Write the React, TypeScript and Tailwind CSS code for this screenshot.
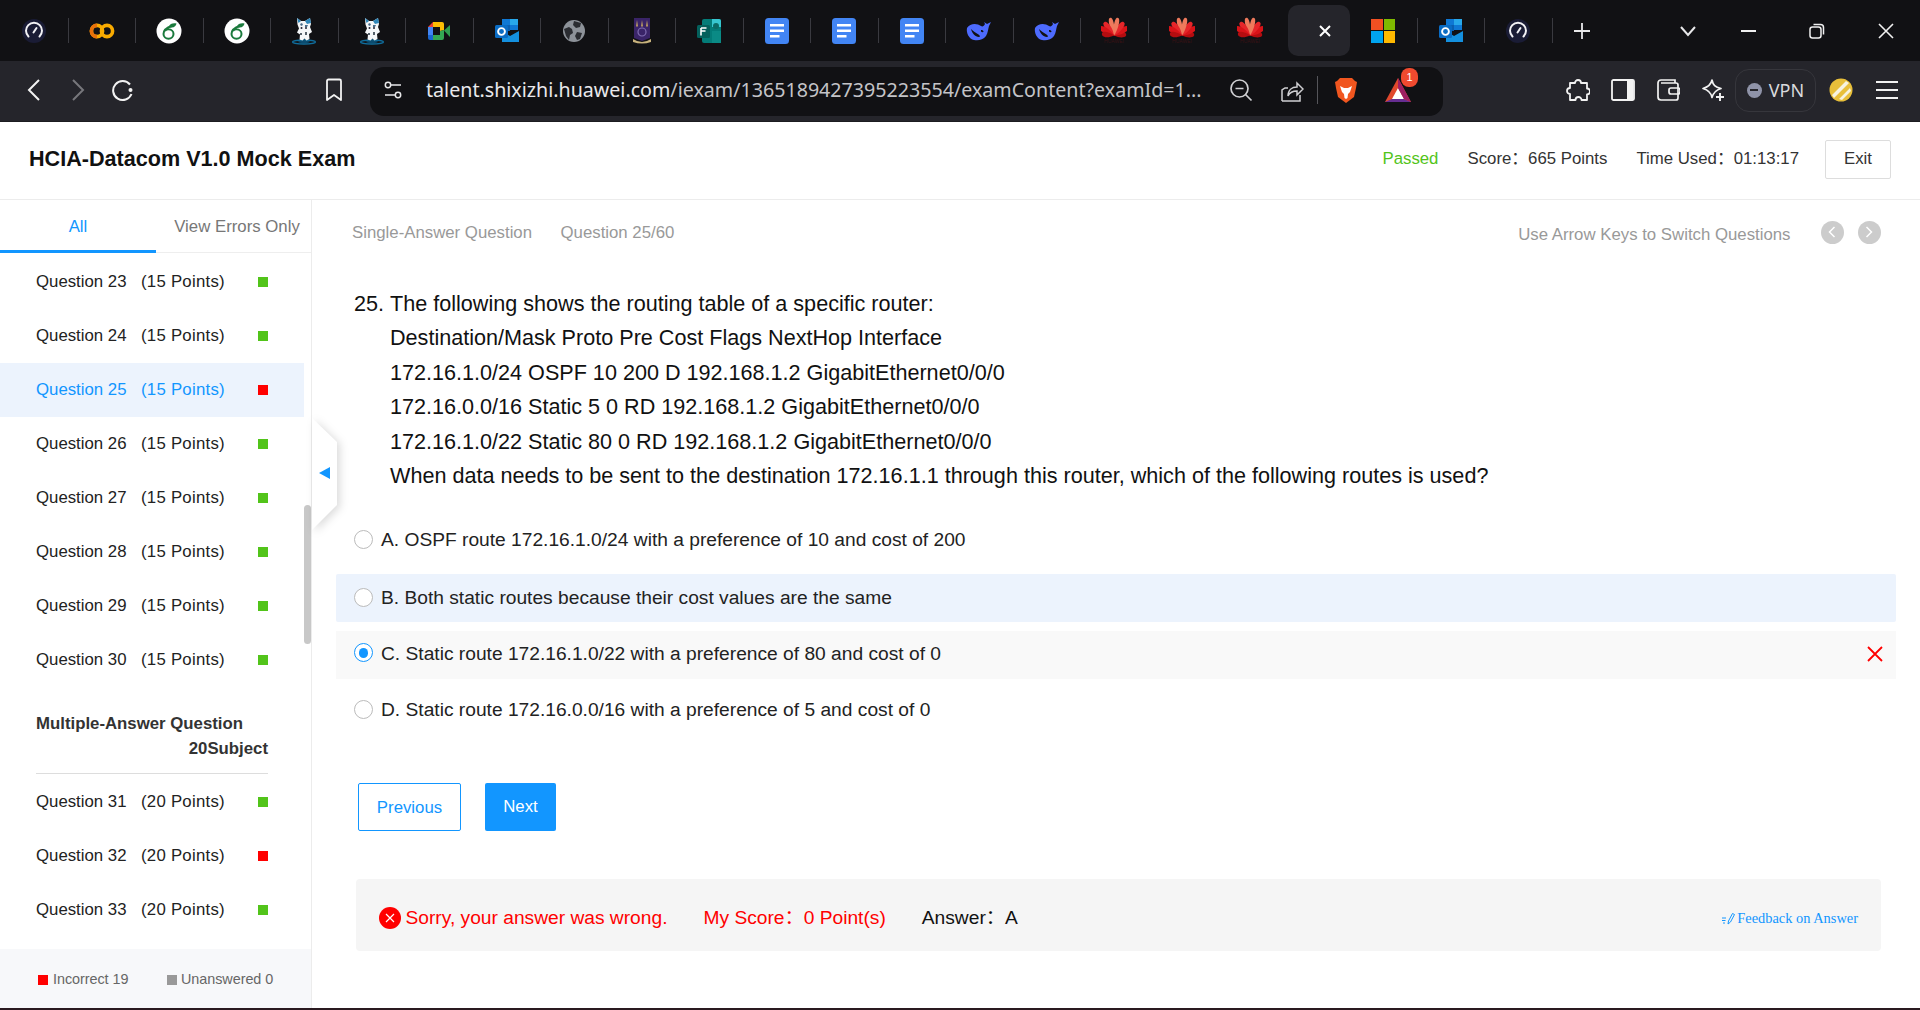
import React from "react";

const Speed = () => (
  <svg width="26" height="26" viewBox="0 0 26 26" fill="none">
    <circle cx="13" cy="13" r="12" fill="#1a1c35" />
    <path d="M7.5 18.5A8 8 0 1 1 18.5 18.5" stroke="#f2f2f5" strokeWidth="2" strokeLinecap="round" />
    <path d="M12.5 14.5L15.5 10" stroke="#f2f2f5" strokeWidth="2" strokeLinecap="round" />
  </svg>
);
const Colab = () => (
  <svg width="26" height="26" viewBox="0 0 26 26" fill="none">
    <circle cx="8" cy="13" r="5.6" stroke="#f9ab00" strokeWidth="3.6" />
    <path d="M8 7.4A5.6 5.6 0 0 0 8 18.6" stroke="#e8710a" strokeWidth="3.6" />
    <circle cx="18" cy="13" r="5.6" stroke="#f9ab00" strokeWidth="3.6" />
  </svg>
);
const Overleaf = () => (
  <svg width="26" height="26" viewBox="0 0 26 26" fill="none">
    <circle cx="13" cy="13" r="12.5" fill="#fff" />
    <path d="M16 8C11 9.500 7.500 12.500 7.500 16a5 4.700 0 1 0 5-4.700c-1.500 0-2.500.5-3.500 1.500" stroke="#1b7a3d" strokeWidth="2" />
    <path d="M12.500 9C14 5.500 17 5 20.500 5.500c-.5 3-3 5-8 3.500z" fill="#1b7a3d" />
  </svg>
);
const Mascot = () => (
  <svg width="26" height="28" viewBox="0 0 26 28" fill="none">
    <ellipse cx="13" cy="25" rx="11.500" ry="2" stroke="#0f6d9c" strokeWidth="1.300" />
    <ellipse cx="13" cy="24.800" rx="6" ry="1.200" fill="#0b4c70" />
    <path d="M6 1l4 3h4l5-3 1 6-1 3 2 5-3 2 .5 5-3 1.500-2-2-2 2-3-1 .5-5-3-2 2-4-1.500-4z" fill="#f4f6f8" />
    <path d="M14 4l5-3 1 5-4 1zM6 1l4 3-2.500 2z" fill="#2f86b8" />
    <path d="M9 7l2-1 1 2-2 1zM14 8h3l-1 2h-2z" fill="#4a6d8a" />
    <circle cx="10.500" cy="11" r="1" fill="#223" />
    <circle cx="15" cy="11" r="1" fill="#223" />
    <path d="M9 16h2v2H9zM14 15h2v3h-2z" fill="#55606a" />
  </svg>
);
const Meet = () => (
  <svg width="22" height="18" viewBox="0 0 22 18">
    <path d="M0 5L5 0v5z" fill="#ea4335" />
    <path d="M5 0h9a2 2 0 0 1 2 2v3H5z" fill="#fbbc04" />
    <path d="M12 5h4v3l-4 1z" fill="#fbbc04" />
    <path d="M0 5h5v8H0z" fill="#4285f4" />
    <path d="M0 13h5v5H2a2 2 0 0 1-2-2z" fill="#1967d2" />
    <path d="M5 13h7V9l4-1v8a2 2 0 0 1-2 2H5z" fill="#34a853" />
    <path d="M16 8.500L22 3v12z" fill="#2f9e4f" />
  </svg>
);
const Outlook = () => (
  <svg width="26" height="26" viewBox="0 0 26 26">
    <path d="M8 1h16v11H8z" fill="#0f78d4" />
    <path d="M16 1h8v6h-8z" fill="#28a8ea" />
    <path d="M8 7h8v6H8z" fill="#0a5fb0" />
    <path d="M8 13l8 5 9-5v11H8z" fill="#1490df" />
    <rect x="1" y="7" width="13" height="13" rx="1.5" fill="#0a6cc4" />
    <circle cx="7.5" cy="13.5" r="3.4" fill="none" stroke="#fff" strokeWidth="1.9" />
  </svg>
);
const Globe = () => (
  <svg width="24" height="24" viewBox="0 0 24 24">
    <circle cx="12" cy="12" r="11" fill="#8d9299" />
    <path d="M2 10l5-2 3 2 1 4-3 2-1 5-3-4zM12 2l7 2-1 4-4 1-3-3zM15 13l5 1-2 6-3 1-2-4z" fill="#2a2c31" />
  </svg>
);
const Crest = () => (
  <svg width="20" height="28" viewBox="0 0 20 28">
    <path d="M2 1h16v20l-8 3-8-3z" fill="#3a2468" />
    <path d="M5 3l1 6-1 1-1-1zM10 3l1 6-1 1-1-1zM15 3l1 6-1 1-1-1z" fill="#b99a63" />
    <circle cx="10" cy="15" r="4" fill="none" stroke="#7f6cb0" strokeWidth="1.2" />
    <path d="M1 22q9 6 18 0v3q-9 3-18 0z" fill="#c8b27c" />
  </svg>
);
const Forms = () => (
  <svg width="26" height="26" viewBox="0 0 26 26">
    <rect x="6" y="1" width="19" height="24" rx="2" fill="#037c78" />
    <path d="M16 1h7a2 2 0 0 1 2 2v6h-9z" fill="#37c6d0" />
    <circle cx="20" cy="8" r="3" fill="#0b6a66" />
    <path d="M16 13h9v12h-9z" fill="#0a8a85" />
    <rect x="1" y="7" width="13" height="13" rx="1.5" fill="#04605c" />
    <path d="M5 10h5.5M5 13h4.5M5 10v7.5" stroke="#fff" strokeWidth="1.6" fill="none" />
  </svg>
);
const Docs = () => (
  <svg width="24" height="26" viewBox="0 0 24 26">
    <rect x="0" y="0" width="24" height="26" rx="3.5" fill="#4285f4" />
    <path d="M5 6h14v2.5H5zM5 11.5h14V14H5zM5 17h9.5v2.500H5z" fill="#fff" />
  </svg>
);
const Whale = () => (
  <svg width="26" height="20" viewBox="0 0 26 20">
    <path d="M1 7C4 2 11 2 15 5c1.500 1 3 0 4-2l-1-2 3 2 4-2-2 4c-1 3-1 7-3 10-3 4-8 5-12 4C3 18 0 12 1 7z" fill="#4d6bfe" />
    <path d="M5 8c1 4 4 8 8 8 1.500 0 1-1.500-.5-2.500C10 12 7 10 5 8zM15 9c1.500 0 2.500.7 2.500 1.500S16 11.500 15 10.500z" fill="#111114" />
  </svg>
);
const Huawei = () => (
  <svg width="26" height="27" viewBox="0 0 26 27">
    {[84, 60, 36, 12, -12, -36, -60, -84].map((r, i) => (
      <path
        key={i}
        d={Math.abs(r) > 70 ? "M13 18.500C10 14 9.800 8.500 11.500 7c1.500-1 2.700-1 3.500 0 1.300 1.500 1 7-2 11.500z" : Math.abs(r) > 30 ? "M13 18.500C9.800 13 9.500 4.500 11.500 2.500c1-.8 2-.8 3 0 2 2 1.700 10.500-1.500 16z" : "M13 18.500C10.300 12 10 3 11.800.8c.8-.6 1.600-.6 2.400 0C16 3 15.700 12 13 18.500z"}
        fill={Math.abs(r) < 20 ? "#ef7a5c" : Math.abs(r) < 50 ? "#e6262a" : Math.abs(r) < 70 ? "#d81318" : "#b40d10"}
        transform={`rotate(${r} 13 18.500)`}
      />
    ))}
    <text x="13" y="25.500" textAnchor="middle" fontSize="5" fill="#3a1214" fontFamily="Liberation Sans">HUAWEI</text>
  </svg>
);
const MsLogo = () => (
  <div className="grid w-[24px] grid-cols-2 gap-[1px]">
    <div className="h-[11.500px] w-[11.500px] bg-[#f25022]" />
    <div className="h-[11.500px] w-[11.500px] bg-[#7fba00]" />
    <div className="h-[11.500px] w-[11.500px] bg-[#00a4ef]" />
    <div className="h-[11.500px] w-[11.500px] bg-[#ffb900]" />
  </div>
);

const Tab = ({ children, sep = true }: { children: React.ReactNode; sep?: boolean }) => (
  <div className={`flex h-[25px] w-[67.5px] shrink-0 items-center justify-center ${sep ? "border-r border-[#3a3a40]" : ""}`}>
    {children}
  </div>
);

const TabStrip = () => (
  <div className="flex h-[61px] shrink-0 items-center bg-[#111114] pl-[1px]">
    <Tab><Speed /></Tab>
    <Tab><Colab /></Tab>
    <Tab><Overleaf /></Tab>
    <Tab><Overleaf /></Tab>
    <Tab><Mascot /></Tab>
    <Tab><Mascot /></Tab>
    <Tab><Meet /></Tab>
    <Tab><Outlook /></Tab>
    <Tab><Globe /></Tab>
    <Tab><Crest /></Tab>
    <Tab><Forms /></Tab>
    <Tab><Docs /></Tab>
    <Tab><Docs /></Tab>
    <Tab><Docs /></Tab>
    <Tab><Whale /></Tab>
    <Tab><Whale /></Tab>
    <Tab><Huawei /></Tab>
    <Tab><Huawei /></Tab>
    <Tab sep={false}><Huawei /></Tab>
    <div className="ml-[4.500px] flex h-[51px] w-[62px] shrink-0 items-center justify-center rounded-[10px] bg-[#25252b] pl-[12px]">
      <svg width="14" height="14" viewBox="0 0 14 14"><path d="M2 2l10 10M12 2L2 12" stroke="#fff" strokeWidth="2" /></svg>
    </div>
    <Tab><MsLogo /></Tab>
    <Tab><Outlook /></Tab>
    <Tab><Speed /></Tab>
    <div className="ml-[6px] flex w-[46px] shrink-0 items-center justify-center">
      <svg width="18" height="18" viewBox="0 0 18 18"><path d="M9 1v16M1 9h16" stroke="#e8e8ea" strokeWidth="1.800" /></svg>
    </div>
    <div className="flex-1" />
    <div className="flex w-[50px] shrink-0 items-center justify-center">
      <svg width="18" height="12" viewBox="0 0 18 12" fill="none"><path d="M2 2l7 8 7-8" stroke="#e8e8ea" strokeWidth="2" /></svg>
    </div>
    <div className="flex w-[69.300px] shrink-0 items-center justify-center">
      <div className="h-[2px] w-[15px] bg-[#f0f0f0]" />
    </div>
    <div className="flex w-[69.300px] shrink-0 items-center justify-center">
      <svg width="16" height="16" viewBox="0 0 16 16" fill="none"><rect x="1" y="4" width="11" height="11" rx="2.500" stroke="#f0f0f0" strokeWidth="1.500" /><path d="M4.500 1.500h7a3 3 0 0 1 3 3v7" stroke="#f0f0f0" strokeWidth="1.500" /></svg>
    </div>
    <div className="flex w-[68px] shrink-0 items-center justify-center">
      <svg width="16" height="16" viewBox="0 0 16 16"><path d="M1 1l14 14M15 1L1 15" stroke="#f0f0f0" strokeWidth="1.600" /></svg>
    </div>
  </div>
);

const Slot = ({ w, children, className = "" }: { w: string; children: React.ReactNode; className?: string }) => (
  <div className={`flex shrink-0 items-center justify-center ${w} ${className}`}>{children}</div>
);

const Toolbar = () => (
  <div className="flex h-[61px] shrink-0 items-center border-b border-[#1c1c20] bg-[#25252b] pb-[2px]">
    <Slot w="w-[12px]"><span /></Slot>
    <Slot w="w-[44px]">
      <svg width="14" height="24" viewBox="0 0 14 24" fill="none"><path d="M12 2L2 12l10 10" stroke="#f2f2f2" strokeWidth="2" /></svg>
    </Slot>
    <Slot w="w-[44px]">
      <svg width="14" height="24" viewBox="0 0 14 24" fill="none"><path d="M2 2l10 10L2 22" stroke="#77777c" strokeWidth="2" /></svg>
    </Slot>
    <Slot w="w-[46px]">
      <svg width="24" height="24" viewBox="0 0 24 24" fill="none"><path d="M19 6.500A9.500 9.500 0 1 0 20.500 16" stroke="#f2f2f2" strokeWidth="2" /><circle cx="19.500" cy="12" r="2" fill="#f2f2f2" /></svg>
    </Slot>
    <Slot w="w-[224px]" className="pl-[152px]">
      <svg width="18" height="24" viewBox="0 0 18 24" fill="none"><path d="M2 3a1.500 1.500 0 0 1 1.500-1.500h11A1.500 1.500 0 0 1 16 3v19l-7-5-7 5z" stroke="#f2f2f2" strokeWidth="1.800" strokeLinejoin="round" /></svg>
    </Slot>
    <div className="mt-[2px] flex h-[49px] w-[1073px] shrink-0 items-center rounded-[14px] bg-[#111114] pb-[2px]">
      <Slot w="w-[46px]">
        <svg width="20" height="20" viewBox="0 0 20 20" fill="none"><circle cx="5" cy="5" r="2.700" stroke="#e8e8ea" strokeWidth="1.500" /><path d="M8 5h10M2 15h10" stroke="#e8e8ea" strokeWidth="1.500" /><circle cx="15" cy="15" r="2.700" stroke="#e8e8ea" strokeWidth="1.500" /></svg>
      </Slot>
      <span className="ml-[10px] w-[790px] shrink-0 whitespace-nowrap font-['Noto_Sans',sans-serif] text-[19.650px] text-[#e9e9ec]">
        talent.shixizhi.huawei.com<span className="text-[#c4c4c8]">/iexam/1365189427395223554/examContent?examId=1...</span>
      </span>
      <Slot w="w-[32px]" className="ml-[9px]">
        <svg width="24" height="24" viewBox="0 0 24 24" fill="none"><circle cx="10.500" cy="10.500" r="8.500" stroke="#cfcfd2" strokeWidth="1.700" /><path d="M6.500 10.500h8M16.500 16.500l6 6" stroke="#cfcfd2" strokeWidth="1.700" /></svg>
      </Slot>
      <Slot w="w-[32px]" className="ml-[19px]">
        <svg width="24" height="24" viewBox="0 0 24 24" fill="none"><path d="M2 23V12l3-2h3M2 23h18v-6" stroke="#cfcfd2" strokeWidth="1.500" /><path d="M8 18c0-6 4-9 9-9V5l6 6-6 6v-4c-4 0-7 1-9 5z" stroke="#cfcfd2" strokeWidth="1.500" /></svg>
      </Slot>
      <div className="ml-[9px] h-[28px] w-[1px] shrink-0 bg-[#55555a]" />
      <Slot w="w-[28px]" className="ml-[14px]">
        <svg width="24" height="27" viewBox="0 0 24 27"><path d="M6 1h12l3 3 2 1-1 6-2 9-8 6-8-6-2-9-1-6 2-1z" fill="#f1561f" /><path d="M6 9l4 2h4l4-2-2 6-2 2-.5 4-1.500 1-1.500-1-.5-4-2-2z" fill="#fff" /></svg>
      </Slot>
      <div className="relative ml-[24px] flex w-[28px] shrink-0 items-center justify-center">
        <svg width="28" height="26" viewBox="0 0 28 26"><path d="M14 1l13 24H1z" fill="#e0482d" /><path d="M14 11l6 11H8z" fill="#fff" /><path d="M1 25l7-3h12l7 3z" fill="#662d91" /><path d="M14 1l13 24-7-3-6-11z" fill="#9e1f63" /></svg>
        <span className="absolute -right-[6px] -top-[9px] flex h-[19px] w-[17px] items-center justify-center rounded-[8px] bg-[#f04a2f] text-[11px] text-white">1</span>
      </div>
    </div>
    <Slot w="w-[28px]" className="ml-[121px]">
      <svg width="24" height="24" viewBox="0 0 24 24" fill="none"><path d="M9 5a3 3 0 0 1 6 0h6v5.500a3 3 0 0 1 0 6V22h-5.500a3 3 0 0 0-6 0H4v-6a3 3 0 0 1 0-6V5z" stroke="#f2f2f2" strokeWidth="1.800" strokeLinejoin="round" /></svg>
    </Slot>
    <Slot w="w-[26px]" className="ml-[18px]">
      <svg width="24" height="22" viewBox="0 0 24 22" fill="none"><rect x="1" y="1" width="22" height="20" rx="1.500" stroke="#f2f2f2" strokeWidth="1.800" /><path d="M16 1h6.500v20H16z" fill="#f2f2f2" /></svg>
    </Slot>
    <Slot w="w-[24px]" className="ml-[20px]">
      <svg width="24" height="22" viewBox="0 0 24 22" fill="none"><path d="M2 4a3 3 0 0 1 3-3h14v3M2 4v14a3 3 0 0 0 3 3h15a2 2 0 0 0 2-2V6a2 2 0 0 0-2-2H5" stroke="#f2f2f2" strokeWidth="1.700" /><rect x="13" y="9" width="11" height="6" rx="2" stroke="#f2f2f2" strokeWidth="1.700" /></svg>
    </Slot>
    <Slot w="w-[24px]" className="ml-[21px]">
      <svg width="24" height="24" viewBox="0 0 24 24" fill="none"><path d="M11 2c1 5 3 7 9 8.500-5 1.500-7.500 3.500-9 9-1-5.500-4-7.500-9-9 5-1.500 8-3.500 9-8.500z" stroke="#f2f2f2" strokeWidth="1.700" strokeLinejoin="round" /><path d="M19 15v8M15 19h8" stroke="#f2f2f2" strokeWidth="1.900" /></svg>
    </Slot>
    <div className="ml-[10px] flex h-[43px] w-[81px] shrink-0 items-center justify-center gap-[7px] rounded-[14px] border border-[#36363c] font-['Noto_Sans',sans-serif] text-[18px] text-[#d9d9dc]">
      <span className="flex h-[15px] w-[15px] items-center justify-center rounded-full bg-[#8f93a8]"><span className="h-[2px] w-[8px] bg-[#25252b]" /></span>
      VPN
    </div>
    <Slot w="w-[24px]" className="ml-[13px]">
      <svg width="24" height="24" viewBox="0 0 24 24"><circle cx="12" cy="12" r="11.500" fill="#e8bf3a" /><path d="M3 17L17 3l3 2L5 20zM10 21L21 10l1 3-9 9z" fill="#f7f3e0" /></svg>
    </Slot>
    <Slot w="w-[24px]" className="ml-[22px]">
      <div className="flex w-[22px] flex-col gap-[6px]">
        <div className="h-[2px] bg-[#f2f2f2]" />
        <div className="h-[2px] bg-[#f2f2f2]" />
        <div className="h-[2px] bg-[#f2f2f2]" />
      </div>
    </Slot>
  </div>
);

const Header = () => (
  <div className="flex h-[78px] shrink-0 items-center border-b border-[#ececec] pb-[3px] pl-[29px] pr-[29px]">
    <h1 className="text-[21.600px] font-bold text-[#111]">HCIA-Datacom V1.0 Mock Exam</h1>
    <div className="flex-1" />
    <span className="text-[16.800px] text-[#52c41a]">Passed</span>
    <span className="ml-[29px] text-[16.800px] text-[#333]">Score：665 Points</span>
    <span className="ml-[29px] text-[16.800px] text-[#333]">Time Used：01:13:17</span>
    <button className="ml-[26px] h-[39px] w-[66px] rounded-[2px] border border-[#ddd] text-[16.800px] text-[#333]">Exit</button>
  </div>
);

const Row = ({ n, pts, bad, active }: { n: number; pts: number; bad?: boolean; active?: boolean }) => (
  <div className={`flex h-[54px] w-[304px] items-center pl-[36px] text-[16.800px] ${active ? "bg-[#ecf3fd] text-[#1296ff]" : "text-[#222]"}`}>
    <span className="w-[105px]">Question {n}</span>
    <span className="w-[117px] tracking-[0.25px]">({pts} Points)</span>
    <span className={`h-[10px] w-[10px] ${bad ? "bg-[#ff0000]" : "bg-[#52c41a]"}`} />
  </div>
);

const Sidebar = () => (
  <aside className="relative flex w-[312px] shrink-0 flex-col border-r border-[#ececec]">
    <div className="flex h-[53px] shrink-0 border-b border-[#eee] text-[16.800px]">
      <div className="flex h-[53px] w-[156px] items-center justify-center border-b-[3px] border-[#1296ff] pt-[4px] text-[#1296ff]">All</div>
      <div className="flex h-[52px] flex-1 items-center justify-center pl-[7px] pt-[2px] text-[#777]">View Errors Only</div>
    </div>
    <div className="relative min-h-0 flex-1 overflow-hidden pt-[2px]">
      <Row n={23} pts={15} />
      <Row n={24} pts={15} />
      <Row n={25} pts={15} bad active />
      <Row n={26} pts={15} />
      <Row n={27} pts={15} />
      <Row n={28} pts={15} />
      <Row n={29} pts={15} />
      <Row n={30} pts={15} />
      <div className="mb-[1px] ml-[36px] w-[232px] border-b border-[#ddd] pb-[12px] pt-[24px] text-[16.800px] font-bold leading-[25px] text-[#333]">
        <div>Multiple-Answer Question</div>
        <div className="text-right">20Subject</div>
      </div>
      <Row n={31} pts={20} />
      <Row n={32} pts={20} bad />
      <Row n={33} pts={20} />
      <div className="absolute right-0 top-[252px] h-[139px] w-[7px] rounded-[4px] bg-[#c8c8c8]" />
    </div>
    <div className="flex h-[59px] shrink-0 items-center bg-[#f7f8fa] pl-[38px] pt-[2px] text-[14.400px] text-[#666]">
      <span className="h-[10px] w-[10px] bg-[#ff0000]" />
      <span className="ml-[5px] w-[114px] tracking-[-0.05px]">Incorrect 19</span>
      <span className="h-[10px] w-[10px] bg-[#999]" />
      <span className="ml-[4px] tracking-[-0.05px]">Unanswered 0</span>
    </div>
    <div className="absolute -right-[27px] top-[218px] z-10 h-[116px] w-[26px]">
      <svg width="26" height="116" viewBox="0 0 26 116" className="drop-shadow-[3px_2px_4px_rgba(0,0,0,0.14)]">
        <path d="M0 0L25 24V87L0 112z" fill="#fff" />
        <path d="M7 55l11-6v12z" fill="#1296ff" />
      </svg>
    </div>
  </aside>
);

const Radio = ({ on }: { on?: boolean }) => (
  <span className={`-mt-[2px] flex h-[19px] w-[19px] shrink-0 items-center justify-center rounded-full border bg-white ${on ? "border-[#1296ff]" : "border-[#bbb]"}`}>
    {on && <span className="h-[9.500px] w-[9.500px] rounded-full bg-[#1296ff]" />}
  </span>
);

const Option = ({ text, on, className = "", children }: { text: string; on?: boolean; className?: string; children?: React.ReactNode }) => (
  <div className={`flex h-[48px] w-[1560px] items-center pl-[18px] pr-[12px] text-[19.200px] text-[#222] ${className}`}>
    <Radio on={on} />
    <span className="ml-[8px]">{text}</span>
    <div className="flex-1" />
    {children}
  </div>
);

const Main = () => (
  <main className="min-w-0 flex-1 pl-[24px]">
    <div className="flex h-[65px] items-center pl-[16px] pr-[39.500px] pt-[1px] text-[16.800px] text-[#999]">
      <span>Single-Answer Question</span>
      <span className="ml-[28.500px]">Question 25/60</span>
      <div className="flex-1" />
      <span className="pt-[4px]">Use Arrow Keys to Switch Questions</span>
      <span className="ml-[30px] flex h-[23px] w-[23px] -translate-y-[1px] items-center justify-center rounded-full bg-[#ccc]">
        <svg width="8" height="12" viewBox="0 0 8 12" fill="none"><path d="M6.500 1L1.500 6l5 5" stroke="#fff" strokeWidth="1.500" /></svg>
      </span>
      <span className="ml-[14px] flex h-[23px] w-[23px] -translate-y-[1px] items-center justify-center rounded-full bg-[#ccc]">
        <svg width="8" height="12" viewBox="0 0 8 12" fill="none"><path d="M1.500 1l5 5-5 5" stroke="#fff" strokeWidth="1.500" /></svg>
      </span>
    </div>
    <div className="ml-[18px] mt-[22px] flex text-[21.600px] leading-[34.400px] text-[#111]">
      <span className="w-[36px] shrink-0">25.</span>
      <div>
        <div>The following shows the routing table of a specific router:</div>
        <div>Destination/Mask Proto Pre Cost Flags NextHop Interface</div>
        <div>172.16.1.0/24 OSPF 10 200 D 192.168.1.2 GigabitEthernet0/0/0</div>
        <div>172.16.0.0/16 Static 5 0 RD 192.168.1.2 GigabitEthernet0/0/0</div>
        <div>172.16.1.0/22 Static 80 0 RD 192.168.1.2 GigabitEthernet0/0/0</div>
        <div>When data needs to be sent to the destination 172.16.1.1 through this router, which of the following routes is used?</div>
      </div>
    </div>
    <div className="mt-[23px]">
      <Option text="A. OSPF route 172.16.1.0/24 with a preference of 10 and cost of 200" />
      <Option text="B. Both static routes because their cost values are the same" className="mt-[10px] rounded-[2px] bg-[#ecf3fd]" />
      <Option text="C. Static route 172.16.1.0/22 with a preference of 80 and cost of 0" on className="mt-[9px] bg-[#f9f9f9] pb-[3px]">
        <svg width="18" height="18" viewBox="0 0 18 18"><path d="M2 2l14 14M16 2L2 16" stroke="#f00" strokeWidth="1.800" /></svg>
      </Option>
      <Option text="D. Static route 172.16.0.0/16 with a preference of 5 and cost of 0" className="mt-[7px]" />
    </div>
    <div className="ml-[22px] mt-[49px] flex gap-[24px]">
      <button className="h-[48px] w-[103px] rounded-[2px] border border-[#1296ff] bg-white text-[16.800px] text-[#1296ff]">Previous</button>
      <button className="h-[48px] w-[71px] rounded-[2px] bg-[#1296ff] pb-[2px] text-[16.800px] text-white">Next</button>
    </div>
    <div className="ml-[20px] mt-[48px] flex h-[72px] w-[1525px] items-center rounded-[4px] bg-[#f5f5f5] pl-[23px] pr-[23px] pt-[6px] text-[19.200px]">
      <span className="flex h-[22px] w-[22px] items-center justify-center rounded-full bg-[#ff0000]">
        <svg width="10" height="10" viewBox="0 0 10 10"><path d="M1 1l8 8M9 1L1 9" stroke="#fff" strokeWidth="1.200" /></svg>
      </span>
      <span className="ml-[4.500px] text-[#ff0000]">Sorry, your answer was wrong.</span>
      <span className="ml-[36px] text-[#ff0000]">My Score：0 Point(s)</span>
      <span className="ml-[36px] text-[#111]">Answer：A</span>
      <div className="flex-1" />
      <span className="flex items-center gap-[2px] font-['Liberation_Serif',serif] text-[14.400px] text-[#1296ff]">
        <svg width="13" height="13" viewBox="0 0 13 13" fill="none"><path d="M0 6h4M0 8.500h3.500M1 11h2" stroke="#1296ff" strokeWidth="1" /><path d="M6 12l.5-3L10.500 1.500l2 1-4 7.500z" stroke="#1296ff" strokeWidth="1" /></svg>
        Feedback on Answer
      </span>
    </div>
  </main>
);

export default function App() {
  return (
    <div className="flex h-screen w-full flex-col overflow-hidden bg-white font-['Liberation_Sans','Noto_Sans_CJK_SC',sans-serif]">
      <TabStrip />
      <Toolbar />
      <Header />
      <div className="flex min-h-0 flex-1">
        <Sidebar />
        <Main />
      </div>
      <div className="h-[2px] shrink-0 bg-[#2a1a20]" />
    </div>
  );
}
